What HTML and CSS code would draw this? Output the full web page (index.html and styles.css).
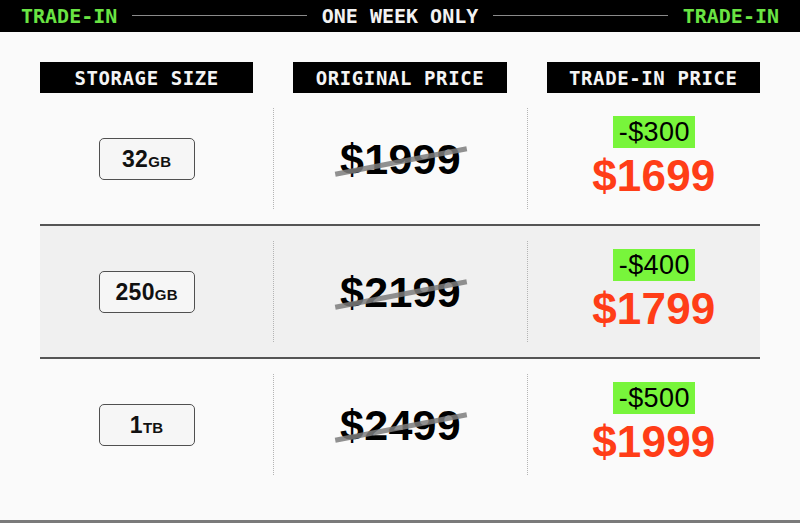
FILE: index.html
```html
<!DOCTYPE html>
<html>
<head>
<meta charset="utf-8">
<link rel="stylesheet" href="styles.css">
</head>
<body>
<div class="page">
  <header class="topbar">
    <span class="tag green">TRADE-IN</span>
    <span class="rule"></span>
    <span class="tag white">ONE WEEK ONLY</span>
    <span class="rule"></span>
    <span class="tag green">TRADE-IN</span>
  </header>

  <section class="table">
    <div class="heads">
      <div class="head">STORAGE SIZE</div>
      <div class="head">ORIGINAL PRICE</div>
      <div class="head">TRADE-IN PRICE</div>
    </div>

    <div class="row">
      <div class="cell first"><span class="badge"><span class="num">32</span><span class="unit">GB</span></span></div>
      <div class="cell mid"><span class="old">$1999</span></div>
      <div class="cell last">
        <div class="deal">
          <span class="off">-$300</span>
          <span class="new">$1699</span>
        </div>
      </div>
    </div>

    <div class="row alt">
      <div class="cell first"><span class="badge"><span class="num">250</span><span class="unit">GB</span></span></div>
      <div class="cell mid"><span class="old">$2199</span></div>
      <div class="cell last">
        <div class="deal">
          <span class="off">-$400</span>
          <span class="new">$1799</span>
        </div>
      </div>
    </div>

    <div class="row plain">
      <div class="cell first"><span class="badge"><span class="num">1</span><span class="unit">TB</span></span></div>
      <div class="cell mid"><span class="old">$2499</span></div>
      <div class="cell last">
        <div class="deal">
          <span class="off">-$500</span>
          <span class="new">$1999</span>
        </div>
      </div>
    </div>
  </section>
</div>
</body>
</html>
```

FILE: styles.css
```css
* { box-sizing: border-box; }

html, body {
  margin: 0;
  padding: 0;
  background: #fafafa;
}

.page {
  width: 800px;
  height: 523px;
  display: flex;
  flex-direction: column;
  border-bottom: 3px solid #7a7a7a;
  overflow: hidden;
}

.topbar {
  height: 32px;
  background: #000;
  display: flex;
  align-items: center;
  gap: 15px;
  padding: 0 21px;
}

.tag {
  font-family: "DejaVu Sans Mono", monospace;
  font-weight: bold;
  font-size: 20px;
  line-height: 1;
  white-space: nowrap;
}

.green { color: #6ae443; }
.white { color: #f2f2f2; }

.rule {
  flex: 1;
  height: 1px;
  background: #8a8a8a;
  margin-top: -1px;
}

.table {
  padding: 30px 40px 0;
}

.heads {
  display: grid;
  grid-template-columns: 1fr 1fr 1fr;
  gap: 40px;
}

.head {
  height: 31px;
  background: #000;
  color: #f4f4f4;
  font-family: "DejaVu Sans Mono", monospace;
  font-weight: bold;
  font-size: 19px;
  letter-spacing: 0.6px;
  display: flex;
  align-items: center;
  justify-content: center;
}

.row {
  display: grid;
  grid-template-columns: 233.33px 253.34px 233.33px;
  padding: 15px 0;
  border-bottom: 2px solid #555;
}

.row.alt { background: #f0f0f0; }
.row.plain { border-bottom: none; }

.cell {
  height: 101px;
  display: flex;
  align-items: center;
  justify-content: center;
}

.cell.first { padding-right: 20px; }
.cell.mid { border-left: 1px dotted #b4b4b4; }
.cell.last { border-left: 1px dotted #b4b4b4; padding-left: 20px; }

.badge {
  width: 96px;
  height: 42px;
  border: 1.5px solid #505050;
  border-radius: 5px;
  background: #f6f6f6;
  display: flex;
  align-items: baseline;
  justify-content: center;
  padding-top: 9px;
  font-family: "Liberation Sans", Arial, sans-serif;
  font-weight: bold;
  color: #111;
}

.num { font-size: 23px; letter-spacing: 0.3px; line-height: 1; }
.unit { font-size: 15px; letter-spacing: 0.3px; line-height: 1; }

.old {
  position: relative;
  font-family: "Liberation Sans", Arial, sans-serif;
  font-weight: bold;
  font-size: 43px;
  letter-spacing: 0.3px;
  line-height: 1;
  color: #000;
  margin-top: 2px;
}

.old::after {
  content: "";
  position: absolute;
  left: -6px;
  right: -7px;
  top: 50%;
  height: 5px;
  margin-top: -1px;
  background: rgba(125, 125, 125, 0.85);
  transform: rotate(-11deg);
}

.deal {
  display: flex;
  flex-direction: column;
  align-items: center;
  gap: 8px;
  margin-top: -5px;
}

.off {
  background: #78f53b;
  color: #000;
  font-family: "Liberation Sans", Arial, sans-serif;
  font-size: 27px;
  letter-spacing: 0.4px;
  line-height: 32px;
  height: 32px;
  padding: 0 5px 0 6px;
}

.new {
  color: #ff3d17;
  font-family: "Liberation Sans", Arial, sans-serif;
  font-weight: bold;
  font-size: 44px;
  letter-spacing: 0.2px;
  line-height: 40px;
}
```
